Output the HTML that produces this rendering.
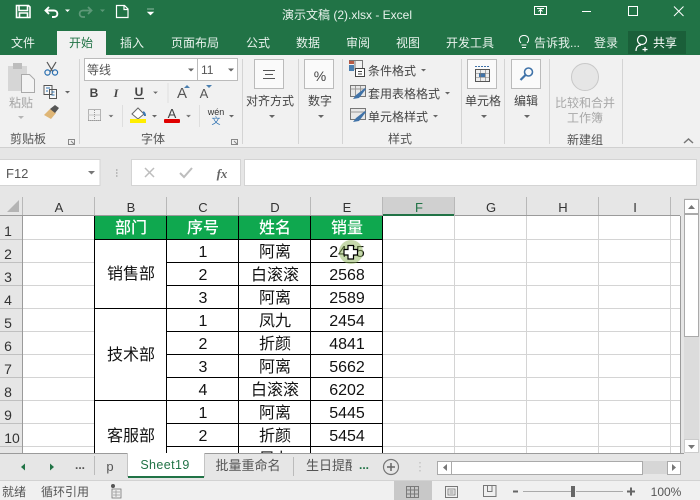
<!DOCTYPE html>
<html><head><meta charset="utf-8">
<style>
html,body{margin:0;padding:0;background:#e6e6e6;width:700px;height:500px;overflow:hidden}
svg{display:block}
text{font-family:"Liberation Sans","Noto Sans CJK SC",sans-serif;font-size:12px;fill:#444}
.w{fill:#fff}
.t{fill:#e8f2ec}
.c{font-size:16px;fill:#111;text-anchor:middle}
.h{font-size:16px;fill:#fff;text-anchor:middle;font-weight:500}
.col{font-size:13px;fill:#333;text-anchor:middle}
.row{font-size:14px;fill:#333;text-anchor:middle}
.m{text-anchor:middle}
.g{fill:#555}
</style></head><body>
<svg width="700" height="500" viewBox="0 0 700 500" xmlns="http://www.w3.org/2000/svg">
<!-- title bar -->
<rect width="700" height="55" fill="#217346"/>
<rect x="57" y="31" width="49" height="24" fill="#f1f1f1"/>
<rect x="628" y="31" width="58" height="23" fill="#1a5f39"/>
<!-- save -->
<path d="M16.500 5.500h12l1.500 1.500v10.500h-13.500z M19 6v4.500h8.500V6 M19.500 17.500v-4.500h8v4.500" fill="none" stroke="#fff" stroke-width="1.600"/>
<!-- undo -->
<path d="M49 7l-3.500 3.500 3.500 3.500M46 10.500h8c4.500 0 4.500 6.500 0 6.500h-2" fill="none" stroke="#fff" stroke-width="1.900"/>
<path d="M65 9.500h5l-2.500 2.500z" fill="#fff"/>
<!-- redo -->
<path d="M88 7l3.500 3.500-3.500 3.500M91 10.500h-8c-4.500 0-4.500 6.500 0 6.500h2" fill="none" stroke="#5d9978" stroke-width="1.800"/>
<path d="M100 9.500h5l-2.500 2.500z" fill="#5d9978"/>
<!-- new -->
<path d="M116.500 5.500h8l3.500 3.500v8.500h-11.500zM124 5.500v4h4" fill="none" stroke="#fff" stroke-width="1.200"/>
<!-- QAT more -->
<path d="M147 9h7M147.500 12h6l-3 3z" fill="#fff" stroke="#fff" stroke-width=".6"/>
<text x="347" y="19" class="t m" font-size="12">演示文稿 (2).xlsx - Excel</text>
<!-- window controls -->
<path d="M534.500 6.500h12v8h-12zM537 8.500h7M540.500 14v-4.500M538.500 11.500l2-2 2 2" fill="none" stroke="#fff" stroke-width="1"/>
<path d="M582 11.500h9" stroke="#fff" stroke-width="1"/>
<rect x="628.500" y="6.500" width="9" height="9" fill="none" stroke="#fff"/>
<path d="M674 6.500l9.500 9.500M683.500 6.500l-9.500 9.500" stroke="#fff" stroke-width="1"/>
<!-- tabs -->
<text x="23" y="47" class="t m">文件</text>
<text x="81" y="47" class="m" style="fill:#217346">开始</text>
<text x="132" y="47" class="t m">插入</text>
<text x="195" y="47" class="t m">页面布局</text>
<text x="258" y="47" class="t m">公式</text>
<text x="308" y="47" class="t m">数据</text>
<text x="358" y="47" class="t m">审阅</text>
<text x="408" y="47" class="t m">视图</text>
<text x="470" y="47" class="t m">开发工具</text>
<path d="M522 47.500h4M521.500 45h5M521 43c-3-3-1.500-7.500 3-7.500s6 4.500 3 7.500" fill="none" stroke="#fff" stroke-width="1"/>
<text x="557" y="47" class="t m">告诉我...</text>
<text x="606" y="47" class="t m">登录</text>
<circle cx="642" cy="40" r="4.500" fill="none" stroke="#fff" stroke-width="1.200"/>
<path d="M636 51c0-4 2-6 5-6M645 47v4.500M642.500 49.500h5" fill="none" stroke="#fff" stroke-width="1.200"/>
<text x="665" y="47" class="w m">共享</text>
<!-- ribbon -->
<rect y="55" width="700" height="92" fill="#f1f1f1"/>
<rect y="147" width="700" height="1" fill="#d0d0d0"/>
<g stroke="#d4d4d4"><path d="M79.500 59v85M242.500 59v85M298.500 59v85M342.500 59v85M461.500 59v85M504.500 59v85M549.500 59v85M622.500 59v85"/></g>
<!-- paste -->
<rect x="8" y="66" width="19" height="25" fill="#d6d6d6"/>
<rect x="13" y="63" width="9" height="6" fill="#bdbdbd"/>
<path d="M21.500 74.500h8l5 5v13h-13z" fill="#f4f4f4" stroke="#aaa"/>
<text x="21" y="107" class="m" style="fill:#a5a5a5">粘贴</text>
<path d="M18 116h6l-3 3z" fill="#b5b5b5"/>
<!-- cut -->
<path d="M47 62l6 10M56 62l-6 10" stroke="#555" stroke-width="1.200"/>
<circle cx="47.500" cy="72.500" r="2.600" fill="none" stroke="#2a6fb0" stroke-width="1.200"/>
<circle cx="55" cy="72.500" r="2.600" fill="none" stroke="#2a6fb0" stroke-width="1.200"/>
<!-- copy -->
<path d="M44 85.500h8v9h-8zM49.500 89.500h7v9h-7z" fill="#f8f8f8" stroke="#555"/>
<path d="M46 88h4M46 91h2M51.500 92h3M51.500 95h3" stroke="#2a6fb0"/>
<path d="M65 91h5l-2.500 2.500z" fill="#666"/>
<!-- format painter -->
<path d="M44 115l6-6 6 4-5 6z" fill="#dfb676"/>
<path d="M50 109l5-4 4 3-4 5z" fill="#555"/>
<text x="28" y="143" class="m" style="fill:#555">剪贴板</text>
<path d="M68.500 139.500h6v5h-6zM71 141l3 3" fill="none" stroke="#888"/>
<!-- font -->
<rect x="84.500" y="58.500" width="153" height="22" fill="#fff" stroke="#bbb"/>
<path d="M197.500 59v21" stroke="#bbb"/>
<text x="87" y="74" class="g">等线</text>
<text x="201" y="74" class="g">11</text>
<path d="M188 68.500h6l-3 3zM228 68.500h6l-3 3z" fill="#666"/>
<text x="94" y="97" class="m" style="font-weight:700;font-size:12px;fill:#444">B</text>
<text x="116" y="97" class="m" style="font-style:italic;font-weight:700;font-family:'Liberation Serif',serif;font-size:12px;fill:#444">I</text>
<text x="139" y="96" class="m" style="font-weight:700;fill:#444">U</text>
<path d="M134 98.500h10" stroke="#444" stroke-width="1.200"/>
<path d="M153 91.500h5l-2.500 2.500zM168 83v20" fill="#666" stroke="#ccc" stroke-width=".5"/>
<text x="182" y="98" class="m" style="font-size:15px;fill:#555">A</text>
<path d="M184 88l3-3 3 3z" fill="#4a7fb0"/>
<text x="204" y="98" class="m" style="font-size:13px;fill:#555">A</text>
<path d="M206 85h6l-3 3z" fill="#4a7fb0"/>
<path d="M88.500 109.500h12v11h-12z" fill="none" stroke="#777" stroke-dasharray="1 1"/>
<path d="M88 120.500h13M94.500 110v10M88.500 115h12" stroke="#999" stroke-dasharray="1 1"/>
<path d="M108.500 115h5l-2.500 2.500zM122.500 105v22" fill="#666" stroke="#ccc" stroke-width=".5"/>
<path d="M132 114l6-6 6 6-6 5z" fill="#fff" stroke="#666"/>
<path d="M143 112c2 1 2 3 2 4" stroke="#3b78b4" stroke-width="2" fill="none"/>
<rect x="130" y="119" width="16" height="4" fill="#ffee00"/>
<path d="M152 115h5l-2.500 2.500z" fill="#666"/>
<text x="172" y="118" class="m" style="font-size:13px;fill:#444">A</text>
<rect x="164" y="119" width="16" height="4" rx="1" fill="#e00000"/>
<path d="M186 115h5l-2.500 2.500zM199.500 105v22" fill="#666" stroke="#ccc" stroke-width=".5"/>
<text x="216" y="115" class="m" style="font-size:9px;fill:#333">wén</text>
<text x="216" y="124" class="m" style="font-size:9px;fill:#2a6fb0">文</text>
<path d="M229 115h5l-2.500 2.500z" fill="#666"/>
<text x="153" y="143" class="m" style="fill:#555">字体</text>
<path d="M231.500 139.500h6v5h-6zM234 141l3 3" fill="none" stroke="#888"/>
<!-- align -->
<rect x="254.500" y="59.500" width="29" height="29" fill="#fafafa" stroke="#bbb"/>
<path d="M263 70.500h12M265 74.500h8M263 78.500h12" stroke="#555"/>
<text x="270" y="105" class="m">对齐方式</text>
<path d="M269 115h6l-3 3z" fill="#666"/>
<!-- number -->
<rect x="304.500" y="59.500" width="29" height="29" fill="#fafafa" stroke="#bbb"/>
<text x="320" y="81" class="m" style="font-size:14px;fill:#444">%</text>
<text x="320" y="105" class="m">数字</text>
<path d="M318 115h6l-3 3z" fill="#666"/>
<!-- styles -->
<rect x="349" y="60" width="5" height="4" fill="#b85a45"/>
<rect x="349" y="65" width="5" height="6" fill="#4a7fb0"/>
<path d="M349.500 60.500h13v8M355 60v10" fill="none" stroke="#777"/>
<rect x="355.500" y="68.500" width="9" height="8" fill="#fff" stroke="#444"/>
<path d="M358 71.500h4M358 74h4" stroke="#444"/>
<text x="368" y="75" style="fill:#444">条件格式</text>
<path d="M421 69h5l-2.500 2.500z" fill="#666"/>
<g id="i1"><rect x="350.500" y="85.500" width="15" height="11" fill="#e8e8e8" stroke="#777"/>
<path d="M350.500 89h15M355.500 86v10M360.500 86v10" stroke="#999"/>
<path d="M353 99l3-4 9-7 1 1-7 9z" fill="#3f72a8"/></g>
<text x="368" y="98" style="fill:#444">套用表格格式</text>
<path d="M445 92h5l-2.500 2.500z" fill="#666"/>
<rect x="350.500" y="108.500" width="15" height="11" fill="#e8e8e8" stroke="#777"/>
<path d="M350.500 112h15" stroke="#999"/>
<path d="M353 122l3-4 9-7 1 1-7 9z" fill="#3f72a8"/>
<text x="368" y="121" style="fill:#444">单元格样式</text>
<path d="M433 115h5l-2.500 2.500z" fill="#666"/>
<text x="400" y="143" class="m" style="fill:#555">样式</text>
<!-- cells -->
<rect x="467.500" y="59.500" width="29" height="29" fill="#fafafa" stroke="#bbb"/>
<rect x="475.500" y="69.500" width="14" height="12" fill="#eee" stroke="#555"/>
<rect x="479" y="73" width="6" height="4" fill="#3f72a8"/>
<path d="M475 66.500h15" stroke="#3f72a8" stroke-dasharray="2 1"/>
<path d="M475.500 73.500h14M475.500 77.500h14M480.500 70v11M485.500 70v11" stroke="#777" stroke-width=".6"/>
<text x="483" y="105" class="m">单元格</text>
<path d="M481 115h6l-3 3z" fill="#666"/>
<!-- edit -->
<rect x="511.500" y="59.500" width="29" height="29" fill="#fafafa" stroke="#bbb"/>
<circle cx="528.500" cy="72" r="4" fill="none" stroke="#3f72a8" stroke-width="1.600"/>
<path d="M525.500 75l-5 5" stroke="#3f72a8" stroke-width="2.200"/>
<text x="526" y="105" class="m">编辑</text>
<path d="M524 115h6l-3 3z" fill="#666"/>
<!-- compare -->
<circle cx="585" cy="77" r="13.500" fill="#e6e6e6" stroke="#c8c8c8"/>
<text x="585" y="107" class="m" style="fill:#a8a8a8">比较和合并</text>
<text x="585" y="122" class="m" style="fill:#a8a8a8">工作簿</text>
<text x="585" y="144" class="m" style="fill:#555">新建组</text>
<path d="M684 143l4.500-4 4.500 4" fill="none" stroke="#777" stroke-width="1.500"/>
<!-- formula bar -->
<rect x="-1" y="159.500" width="101" height="26" fill="#fff" stroke="#d4d4d4"/>
<text x="6" y="178" style="font-size:13px;fill:#555">F12</text>
<path d="M88 171h7l-3.500 3.500z" fill="#777"/>
<path d="M116 170h1.500M116 173h1.500M116 176h1.500" stroke="#aaa" stroke-width="1.400"/>
<rect x="131.500" y="159.500" width="109" height="26" fill="#fff" stroke="#d4d4d4"/>
<path d="M145 168l9 9M154 168l-9 9" stroke="#bdbdbd" stroke-width="1.500"/>
<path d="M180 173l4 4 8-9" fill="none" stroke="#bdbdbd" stroke-width="2"/>
<text x="222" y="178" class="m" style="font-family:'Liberation Serif',serif;font-style:italic;font-weight:700;font-size:13px;fill:#666">fx</text>
<rect x="244.500" y="159.500" width="452" height="26" fill="#fff" stroke="#d4d4d4"/>
<!-- sheet -->
<rect x="23" y="216" width="657" height="237" fill="#fff"/>
<!-- col header -->
<rect x="0" y="197" width="680" height="19" fill="#e6e6e6"/>
<rect x="383" y="197" width="71" height="17" fill="#d0d0d0"/>
<rect x="383" y="214" width="72" height="2" fill="#217346"/>
<path d="M7 212h12v-12z" fill="#b4b4b4"/>
<g stroke="#b8b8b8"><path d="M22.500 197v19M94.500 197v19M166.500 197v19M238.500 197v19M310.500 197v19M382.500 197v19M454.500 197v19M526.500 197v19M598.500 197v19M670.500 197v19"/></g>
<path d="M0 215.500h383M455 215.500h225" stroke="#9b9b9b"/>
<text x="59" y="212" class="col">A</text><text x="131" y="212" class="col">B</text><text x="203" y="212" class="col">C</text><text x="275" y="212" class="col">D</text><text x="347" y="212" class="col">E</text>
<text x="419" y="212" class="col" style="fill:#217346">F</text><text x="491" y="212" class="col">G</text><text x="563" y="212" class="col">H</text><text x="635" y="212" class="col">I</text>
<!-- row header -->
<rect x="0" y="216" width="23" height="237" fill="#e6e6e6"/>
<g stroke="#c0c0c0"><path d="M0 239.500h22M0 262.500h22M0 285.500h22M0 308.500h22M0 331.500h22M0 354.500h22M0 377.500h22M0 400.500h22M0 423.500h22M0 446.500h22"/></g>
<path d="M22.500 216v237" stroke="#9b9b9b"/>
<text x="8" y="236" class="row">1</text><text x="8" y="259" class="row">2</text><text x="8" y="282" class="row">3</text><text x="8" y="305" class="row">4</text><text x="8" y="328" class="row">5</text><text x="8" y="351" class="row">6</text><text x="8" y="374" class="row">7</text><text x="8" y="397" class="row">8</text><text x="8" y="420" class="row">9</text><text x="12" y="443" class="row">10</text>
<!-- light grid -->
<g stroke="#d4d4d4"><path d="M23 239.500h72M383 239.500h297M23 262.500h72M383 262.500h297M23 285.500h72M383 285.500h297M23 308.500h72M383 308.500h297M23 331.500h72M383 331.500h297M23 354.500h72M383 354.500h297M23 377.500h72M383 377.500h297M23 400.500h72M383 400.500h297M23 423.500h72M383 423.500h297M23 446.500h72M383 446.500h297"/>
<path d="M454.500 216v237M526.500 216v237M598.500 216v237M670.500 216v237"/></g>
<path d="M680.500 216v237.500H0" fill="none" stroke="#9b9b9b"/>
<!-- table -->
<rect x="95" y="216" width="288" height="23" fill="#0fa84f"/>
<g stroke="#000" stroke-width="1"><path d="M94.500 216v237M166.500 216v237M238.500 216v237M310.500 216v237M382.500 216v237"/>
<path d="M95 239.500h288M167 262.500h216M167 285.500h216M95 308.500h288M167 331.500h216M167 354.500h216M167 377.500h216M95 400.500h288M167 423.500h216M167 446.500h216"/></g>
<text x="131" y="233" class="h">部门</text><text x="203" y="233" class="h">序号</text><text x="275" y="233" class="h">姓名</text><text x="347" y="233" class="h">销量</text>
<text x="131" y="279" class="c">销售部</text><text x="131" y="360" class="c">技术部</text><text x="131" y="441" class="c">客服部</text>
<text x="203" y="257" class="c">1</text><text x="275" y="257" class="c">阿离</text><text x="347" y="257" class="c">2455</text>
<text x="203" y="280" class="c">2</text><text x="275" y="280" class="c">白滚滚</text><text x="347" y="280" class="c">2568</text>
<text x="203" y="303" class="c">3</text><text x="275" y="303" class="c">阿离</text><text x="347" y="303" class="c">2589</text>
<text x="203" y="326" class="c">1</text><text x="275" y="326" class="c">凤九</text><text x="347" y="326" class="c">2454</text>
<text x="203" y="349" class="c">2</text><text x="275" y="349" class="c">折颜</text><text x="347" y="349" class="c">4841</text>
<text x="203" y="372" class="c">3</text><text x="275" y="372" class="c">阿离</text><text x="347" y="372" class="c">5662</text>
<text x="203" y="395" class="c">4</text><text x="275" y="395" class="c">白滚滚</text><text x="347" y="395" class="c">6202</text>
<text x="203" y="418" class="c">1</text><text x="275" y="418" class="c">阿离</text><text x="347" y="418" class="c">5445</text>
<text x="203" y="441" class="c">2</text><text x="275" y="441" class="c">折颜</text><text x="347" y="441" class="c">5454</text>
<text x="203" y="464" class="c">3</text><text x="275" y="464" class="c">凤九</text><text x="347" y="464" class="c">5545</text>
<!-- cursor -->
<circle cx="351" cy="252" r="12" fill="#8db45a" fill-opacity=".5"/>
<path d="M348 245.500h5.500v4h4v5.500h-4v4h-5.500v-4h-4v-5.500h4z" fill="#fff" stroke="#000" stroke-width="1.200"/>
<!-- v scrollbar -->
<rect x="684" y="198" width="15" height="255" fill="#dcdcdc"/>
<rect x="684.500" y="199.500" width="14" height="14" fill="#fff" stroke="#aaa"/>
<path d="M688 209h7l-3.500-4z" fill="#777"/>
<rect x="684.500" y="214.500" width="14" height="122" fill="#fff" stroke="#aaa"/>
<rect x="684.500" y="439.500" width="14" height="13" fill="#fff" stroke="#ccc"/>
<path d="M688 445h7l-3.500 4z" fill="#777"/>
<!-- tab bar -->
<rect y="454" width="700" height="27" fill="#e6e6e6"/>
<path d="M0 453.500h128M204 453.500h480" stroke="#9b9b9b"/>
<path d="M21 467l4-3.500v7z" fill="#217346"/>
<path d="M50 463.500l4 3.500-4 3.500z" fill="#217346"/>
<text x="80" y="469" class="m" style="font-weight:700;fill:#555">...</text>
<path d="M94.500 456v19" stroke="#bbb"/>
<text x="110" y="471" class="m" style="font-size:13px;fill:#555">p</text>
<rect x="128" y="453" width="76" height="24" fill="#fff"/>
<path d="M127.500 453v24M204.500 453v24" stroke="#c4c4c4"/>
<rect x="128" y="476" width="76" height="2" fill="#217346"/>
<text x="165" y="469" class="m" style="font-size:12.500px;fill:#217346;letter-spacing:.4px">Sheet19</text>
<text x="248" y="470" class="m" style="font-size:13px;fill:#555">批量重命名</text>
<path d="M293.500 457v19" stroke="#bbb"/>
<text x="306" y="470" style="font-size:13px;fill:#555">生日提醒</text>
<rect x="352" y="454" width="18" height="26" fill="#e6e6e6"/>
<text x="364" y="469" class="m" style="font-weight:700;fill:#217346">...</text>
<circle cx="391" cy="467" r="7.500" fill="none" stroke="#777" stroke-width="1.200"/>
<path d="M387 467h8M391 463v8" stroke="#666" stroke-width="1.500"/>
<path d="M420 462v1.500M420 466v1.500M420 470v1.500" stroke="#c2c2c2" stroke-width="1.400"/>
<rect x="437" y="461" width="244" height="13" fill="#d6d6d6"/>
<rect x="437.500" y="461.500" width="14" height="13" fill="#fff" stroke="#aaa"/>
<path d="M447 464v7l-4-3.500z" fill="#777"/>
<rect x="451.500" y="461.500" width="191" height="13" fill="#fff" stroke="#aaa"/>
<rect x="667.500" y="461.500" width="13" height="13" fill="#fff" stroke="#aaa"/>
<path d="M672 464v7l4-3.500z" fill="#777"/>
<!-- status -->
<rect y="481" width="700" height="19" fill="#f0f0f0"/>
<path d="M0 480.500h700" stroke="#d2d2d2"/>
<text x="2" y="496" style="fill:#555">就绪</text>
<text x="41" y="496" style="fill:#555">循环引用</text>
<rect x="112" y="489" width="9" height="9" fill="#eee" stroke="#777" stroke-width=".8"/>
<circle cx="113" cy="486" r="2" fill="#555"/>
<path d="M113 492h7M113 495h7M116 490v7" stroke="#999" stroke-width=".8"/>
<rect x="394" y="481" width="38" height="19" fill="#c8c8c8"/>
<path d="M406.500 486.500h12v11h-12zM406.500 490h12M406.500 494h12M410.500 486.500v11M414.500 486.500v11" fill="none" stroke="#7a7a7a"/>
<rect x="445.500" y="486.500" width="12" height="11" fill="none" stroke="#777"/>
<path d="M448 489h7v6h-7zM449.500 491h4M449.500 493h4" fill="none" stroke="#777" stroke-width=".8"/>
<path d="M483.500 485.500h12.500v11h-12.500zM487.500 485.500v6h4.500v-6" fill="none" stroke="#777"/>
<path d="M513 491.500h5" stroke="#666" stroke-width="2"/>
<path d="M523 491.500h50.500M576 491.500h47" stroke="#aaa"/>
<rect x="571" y="486" width="4" height="11" fill="#666"/>
<path d="M627 491.500h8M631 487.500v8" stroke="#666" stroke-width="2"/>
<text x="666" y="496" class="m" style="font-size:12px;fill:#555">100%</text>
</svg>
</body></html>
